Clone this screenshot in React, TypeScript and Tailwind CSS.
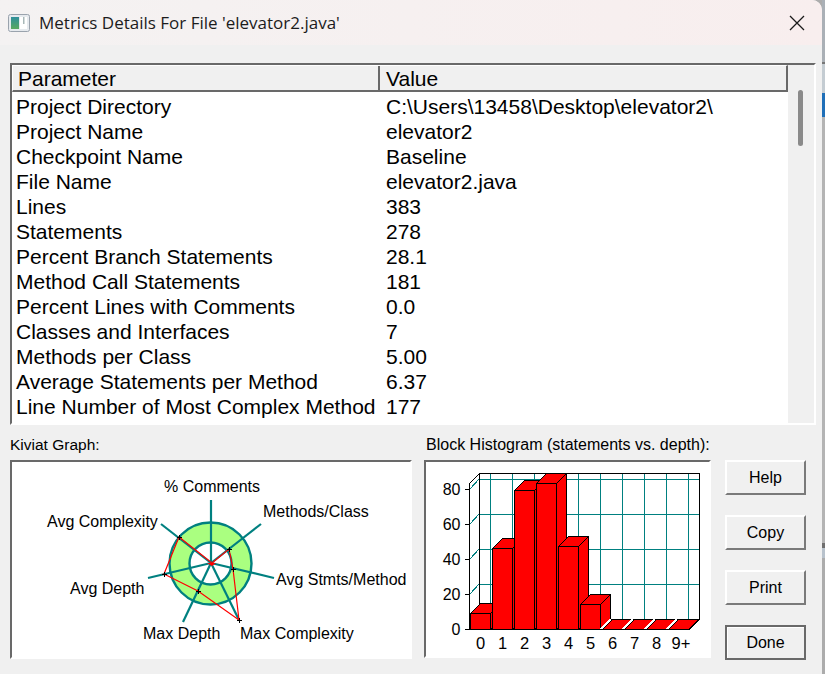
const rows = [
  ["Project Directory", "C:\\Users\\13458\\Desktop\\elevator2\\"],
  ["Project Name", "elevator2"],
  ["Checkpoint Name", "Baseline"],
  ["File Name", "elevator2.java"],
  ["Lines", "383"],
  ["Statements", "278"],
  ["Percent Branch Statements", "28.1"],
  ["Method Call Statements", "181"],
  ["Percent Lines with Comments", "0.0"],
  ["Classes and Interfaces", "7"],
  ["Methods per Class", "5.00"],
  ["Average Statements per Method", "6.37"],
  ["Line Number of Most Complex Method", "177"],
];

const CENTER: [number, number] = [211, 563];

const spokes = [
  [211, 500],
  [261, 524],
  [274, 578],
  [239, 620],
  [183, 622],
  [148, 578],
  [161, 524],
];

const kiviatPoints = [
  [212, 563],
  [229, 549],
  [233, 569],
  [239, 620],
  [198, 591],
  [164, 574],
  [179, 537],
];

const kiviatLabels = [
  { text: "% Comments", x: 164, y: 492 },
  { text: "Methods/Class", x: 263, y: 517 },
  { text: "Avg Stmts/Method", x: 276, y: 585 },
  { text: "Max Complexity", x: 240, y: 639 },
  { text: "Max Depth", x: 143, y: 639 },
  { text: "Avg Depth", x: 70, y: 594 },
  { text: "Avg Complexity", x: 47, y: 527 },
];

const Kiviat = () => (
  <svg width="398" height="195" viewBox="12 462 398 195" className="block">
    <circle cx="210.5" cy="563.5" r="41" fill="#aaff80" stroke="#008080" strokeWidth="2.4" />
    <circle cx="210.5" cy="563.5" r="21" fill="#fff" stroke="#008080" strokeWidth="2.4" />
    {spokes.map(([x, y]) => (
      <line key={`${x}-${y}`} x1={CENTER[0]} y1={CENTER[1]} x2={x} y2={y} stroke="#008080" strokeWidth="2.2" />
    ))}
    <polygon points={kiviatPoints.map((p) => p.join(",")).join(" ")} fill="none" stroke="#ff0000" strokeWidth="1.2" />
    <polygon points="207,563 216,563 212,566" fill="#ff0000" />
    <g shapeRendering="crispEdges">
      {kiviatPoints.slice(1).map(([x, y]) => (
        <path key={`${x}-${y}`} d={`M${x - 2.5} ${y + 0.5}H${x + 3}M${x + 0.5} ${y - 2.5}V${y + 3}`} stroke="#000" strokeWidth="1" />
      ))}
    </g>
    {kiviatLabels.map((l) => (
      <text key={l.text} x={l.x} y={l.y} fontSize="16" fill="#000" fontFamily="'Liberation Sans', Arial, sans-serif">
        {l.text}
      </text>
    ))}
  </svg>
);

const barTops = [613, 548, 490, 483, 546, 604, 629, 629, 629, 629];
const xLabels = ["0", "1", "2", "3", "4", "5", "6", "7", "8", "9+"];
const gridY = [479, 514, 549, 584];

const Histogram = () => (
  <svg width="283" height="194" viewBox="426 462 283 194" className="block">
    <g shapeRendering="crispEdges" fill="none">
      {gridY.map((y) => (
        <g key={y} stroke="#008080">
          <line x1="479" y1={y + 0.5} x2="699" y2={y + 0.5} />
          <line x1="470" y1={y + 10} x2="479" y2={y} />
        </g>
      ))}
      {barTops.map((_, i) => (
        <line key={i} x1={490.5 + i * 22} y1="473" x2={490.5 + i * 22} y2="619" stroke="#008080" />
      ))}
      <path d="M469.5 629V483.5L479.5 473.5H699.5V619.5L689.5 629.5H469.5M479.5 473.5V619.5M699.5 619.5H479.5L469.5 629.5" stroke="#000" />
      {[489, 524, 559, 594, 629].map((y) => (
        <line key={y} x1="465" y1={y + 0.5} x2="470" y2={y + 0.5} stroke="#000" />
      ))}
      {barTops.map((top, i) => {
        const x = 470.5 + i * 22;
        if (top === 629) {
          return (
            <g key={i}>
              <line x1={x - 2} y1="629" x2={x + 8} y2="619" stroke="#fff" strokeWidth="1.5" />
              <polygon points={`${x},629.5 ${x + 20},629.5 ${x + 30},619.5 ${x + 10},619.5`} fill="#ff0000" stroke="#000" />
            </g>
          );
        }
        return (
          <g key={i} fill="#ff0000" stroke="#000">
            <polygon points={`${x + 20},${top + 0.5} ${x + 30},${top - 9.5} ${x + 30},619.5 ${x + 20},629.5`} />
            <polygon points={`${x},${top + 0.5} ${x + 10},${top - 9.5} ${x + 30},${top - 9.5} ${x + 20},${top + 0.5}`} />
            <rect x={x} y={top + 0.5} width="20" height={629 - top} />
          </g>
        );
      })}
    </g>
    <g fontSize="16" fill="#000" fontFamily="'Liberation Sans', Arial, sans-serif">
      {[80, 60, 40, 20, 0].map((v, i) => (
        <text key={v} x="460.5" y={495 + i * 35} textAnchor="end">
          {v}
        </text>
      ))}
      {xLabels.map((l, i) => (
        <text key={l} x={l === "9+" ? 681 : 480.5 + i * 22} y="649" fontSize="16.5" textAnchor="middle">
          {l}
        </text>
      ))}
    </g>
  </svg>
);

const Button = ({ label, primary }: { label: string; primary?: boolean }) => (
  <button
    className={`h-[35px] w-[81px] bg-[#f0f0f0] text-base text-black ${
      primary
        ? "border-2 border-[#696969] shadow-[inset_1px_1px_0_#fff]"
        : "border-2 border-t-white border-l-white border-r-[#7a7a7a] border-b-[#7a7a7a]"
    }`}
  >
    {label}
  </button>
);

export default function App() {
  return (
    <div className="flex h-[674px] w-[825px] overflow-hidden bg-[#acacac] font-['Liberation_Sans',Arial,sans-serif]">
      <div className="flex w-[822px] shrink-0 flex-col rounded-tr-[10px] bg-[#f0f0f0] overflow-hidden">
        {/* title bar */}
        <div className="flex h-[45px] shrink-0 items-center bg-gradient-to-r from-[#f4f2f2] to-[#f8eeee] pl-2 pr-[17px]">
          <svg width="22" height="18" viewBox="0 0 22 18">
            <defs>
              <linearGradient id="ico" x1="0" y1="0" x2="0" y2="1">
                <stop offset="0" stopColor="#2f8f9c" />
                <stop offset="1" stopColor="#5aa95f" />
              </linearGradient>
            </defs>
            <rect x="0.5" y="0.5" width="21" height="17" rx="2" fill="#e6eaee" stroke="#9aa3ad" />
            <rect x="3" y="3" width="8" height="12" fill="url(#ico)" />
            <rect x="12" y="3" width="7" height="12" fill="#fff" />
            <rect x="15" y="3" width="1.5" height="7" fill="#a8b8b8" />
          </svg>
          <span className="ml-[9px] font-['Open_Sans',sans-serif] text-[17px] text-[#1c1c1c]">
            Metrics Details For File 'elevator2.java'
          </span>
          <svg width="16" height="16" viewBox="0 0 16 16" className="ml-auto">
            <path d="M1 1L15 15M15 1L1 15" stroke="#1a1a1a" strokeWidth="1.3" />
          </svg>
        </div>

        <div className="flex flex-col pl-[10px] pr-[6px] pt-[18px]">
          {/* metrics table */}
          <div className="flex h-[362px] border-2 border-t-[#696969] border-l-[#696969] border-r-white border-b-white">
            <div className="w-[776px] shrink-0 bg-white">
              <div className="grid h-[27px] grid-cols-[367px_1fr] border-t border-l border-t-white border-l-white border-b-2 border-r-2 border-b-[#696969] border-r-[#696969] bg-[#f0f0f0] text-[21px] leading-[26px] text-black">
                <div className="border-r-2 border-[#696969] pl-[5px]">Parameter</div>
                <div className="pl-[6px]">Value</div>
              </div>
              <div className="pt-[2px]">
                {rows.map(([name, value]) => (
                  <div key={name} className="grid h-[25px] grid-cols-[370px_1fr] pl-[4px] text-[21px] leading-[25px] text-black">
                    <div className="whitespace-nowrap">{name}</div>
                    <div>{value}</div>
                  </div>
                ))}
              </div>
            </div>
            {/* scrollbar */}
            <div className="flex-1 pl-[10px] pt-[25px]">
              <div className="h-[56px] w-[5px] rounded-full bg-[#8a8a8a]" />
            </div>
          </div>

          <div className="mt-[10px] flex">
            <div className="w-[402px] shrink-0">
              <div className="h-[25px] text-[15.5px] leading-[19px] text-black">Kiviat Graph:</div>
              <div className="h-[199px] border-2 border-t-[#696969] border-l-[#696969] border-r-white border-b-white bg-white">
                <Kiviat />
              </div>
            </div>
            <div className="ml-3 w-[287px] shrink-0">
              <div className="h-[25px] whitespace-nowrap pl-[2px] text-base leading-[19px] text-black">
                Block Histogram (statements vs. depth):
              </div>
              <div className="h-[198px] border-2 border-t-[#696969] border-l-[#696969] border-r-white border-b-white bg-white">
                <Histogram />
              </div>
            </div>
            <div className="ml-[14px] flex flex-col gap-5 pt-[25px]">
              <Button label="Help" />
              <Button label="Copy" />
              <Button label="Print" />
              <Button label="Done" primary />
            </div>
          </div>
        </div>
      </div>

      {/* sliver of the window behind */}
      <div className="flex flex-1 flex-col">
        <div className="h-[62px] bg-[#aab0b6]" />
        <div className="h-[2px] bg-[#777]" />
        <div className="h-[29px] bg-[#c4ccd2]" />
        <div className="h-[24px] bg-[#1f6fb8]" />
        <div className="h-[426px] bg-[#b4b4b4]" />
        <div className="h-[5px] bg-[#6f6f6f]" />
        <div className="h-[10px] bg-[#b8c2cc]" />
        <div className="flex-1 bg-[#acacac]" />
      </div>
    </div>
  );
}
